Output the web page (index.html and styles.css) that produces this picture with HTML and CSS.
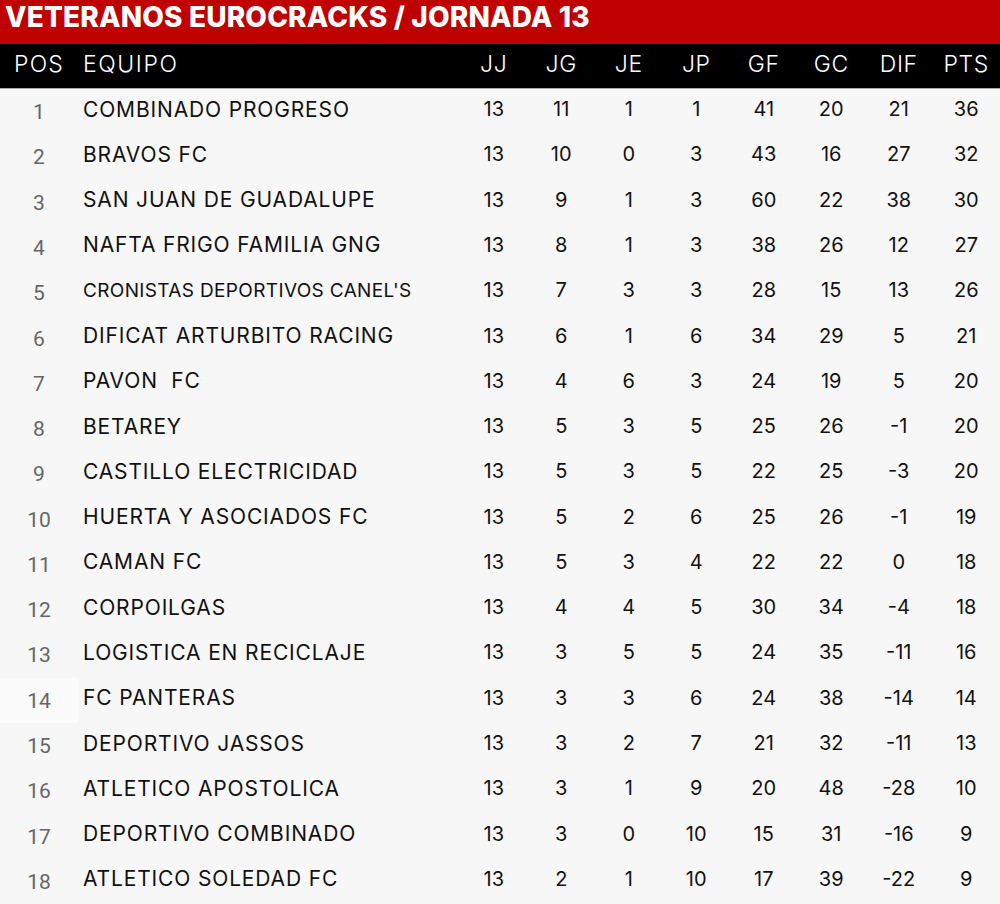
FILE: index.html
```html
<!DOCTYPE html>
<html lang="es">
<head>
<meta charset="utf-8">
<title>Veteranos Eurocracks / Jornada 13</title>
<link rel="stylesheet" href="styles.css">
</head>
<body>
<div class="board">
  <h1 class="title">VETERANOS EUROCRACKS / JORNADA 13</h1>
  <div class="row head">
    <div class="pos">POS</div><div class="team">EQUIPO</div>
    <div>JJ</div><div>JG</div><div>JE</div><div>JP</div><div>GF</div><div>GC</div><div>DIF</div><div>PTS</div>
  </div>
  <div class="rows">
    <div class="row"><div class="pos">1</div><div class="team">COMBINADO PROGRESO</div><div>13</div><div>11</div><div>1</div><div>1</div><div>41</div><div>20</div><div>21</div><div>36</div></div>
    <div class="row"><div class="pos">2</div><div class="team">BRAVOS FC</div><div>13</div><div>10</div><div>0</div><div>3</div><div>43</div><div>16</div><div>27</div><div>32</div></div>
    <div class="row"><div class="pos">3</div><div class="team">SAN JUAN DE GUADALUPE</div><div>13</div><div>9</div><div>1</div><div>3</div><div>60</div><div>22</div><div>38</div><div>30</div></div>
    <div class="row"><div class="pos">4</div><div class="team">NAFTA FRIGO FAMILIA GNG</div><div>13</div><div>8</div><div>1</div><div>3</div><div>38</div><div>26</div><div>12</div><div>27</div></div>
    <div class="row"><div class="pos">5</div><div class="team small">CRONISTAS DEPORTIVOS CANEL'S</div><div>13</div><div>7</div><div>3</div><div>3</div><div>28</div><div>15</div><div>13</div><div>26</div></div>
    <div class="row"><div class="pos">6</div><div class="team">DIFICAT ARTURBITO RACING</div><div>13</div><div>6</div><div>1</div><div>6</div><div>34</div><div>29</div><div>5</div><div>21</div></div>
    <div class="row"><div class="pos">7</div><div class="team">PAVON&nbsp; FC</div><div>13</div><div>4</div><div>6</div><div>3</div><div>24</div><div>19</div><div>5</div><div>20</div></div>
    <div class="row"><div class="pos">8</div><div class="team">BETAREY</div><div>13</div><div>5</div><div>3</div><div>5</div><div>25</div><div>26</div><div>-1</div><div>20</div></div>
    <div class="row"><div class="pos">9</div><div class="team">CASTILLO ELECTRICIDAD</div><div>13</div><div>5</div><div>3</div><div>5</div><div>22</div><div>25</div><div>-3</div><div>20</div></div>
    <div class="row"><div class="pos">10</div><div class="team">HUERTA Y ASOCIADOS FC</div><div>13</div><div>5</div><div>2</div><div>6</div><div>25</div><div>26</div><div>-1</div><div>19</div></div>
    <div class="row"><div class="pos">11</div><div class="team">CAMAN FC</div><div>13</div><div>5</div><div>3</div><div>4</div><div>22</div><div>22</div><div>0</div><div>18</div></div>
    <div class="row"><div class="pos">12</div><div class="team">CORPOILGAS</div><div>13</div><div>4</div><div>4</div><div>5</div><div>30</div><div>34</div><div>-4</div><div>18</div></div>
    <div class="row"><div class="pos">13</div><div class="team">LOGISTICA EN RECICLAJE</div><div>13</div><div>3</div><div>5</div><div>5</div><div>24</div><div>35</div><div>-11</div><div>16</div></div>
    <div class="row"><div class="pos hl">14</div><div class="team">FC PANTERAS</div><div>13</div><div>3</div><div>3</div><div>6</div><div>24</div><div>38</div><div>-14</div><div>14</div></div>
    <div class="row"><div class="pos">15</div><div class="team">DEPORTIVO JASSOS</div><div>13</div><div>3</div><div>2</div><div>7</div><div>21</div><div>32</div><div>-11</div><div>13</div></div>
    <div class="row"><div class="pos">16</div><div class="team">ATLETICO APOSTOLICA</div><div>13</div><div>3</div><div>1</div><div>9</div><div>20</div><div>48</div><div>-28</div><div>10</div></div>
    <div class="row"><div class="pos">17</div><div class="team">DEPORTIVO COMBINADO</div><div>13</div><div>3</div><div>0</div><div>10</div><div>15</div><div>31</div><div>-16</div><div>9</div></div>
    <div class="row"><div class="pos">18</div><div class="team">ATLETICO SOLEDAD FC</div><div>13</div><div>2</div><div>1</div><div>10</div><div>17</div><div>39</div><div>-22</div><div>9</div></div>
  </div>
</div>
</body>
</html>
```
FILE: styles.css
```css
* { box-sizing: border-box; }
html, body { margin: 0; padding: 0; }
body {
  width: 1000px;
  height: 904px;
  overflow: hidden;
  background: #f7f7f7;
  font-family: "Inter", "Open Sans", sans-serif;
}
.board { display: flex; flex-direction: column; height: 904px; }
.title {
  margin: 0;
  height: 44px;
  background: #c00000;
  color: #fff;
  font-family: "Inter", sans-serif;
  font-weight: 800;
  font-size: 28px;
  line-height: 34px;
  padding-left: 5px;
  letter-spacing: 0.15px;
}
.row {
  display: grid;
  grid-template-columns: 78px 382px repeat(8, 1fr);
  align-items: center;
  font-size: 20px;
  color: #111;
}
.row > div { text-align: center; }
.row > .team { text-align: left; padding-left: 5px; white-space: nowrap; font-size: 21px; letter-spacing: 0.85px; }
.head {
  height: 45px;
  background: #000;
  color: #fff;
  font-weight: 300;
  font-size: 23px;
  border-bottom: 1px solid #a8a8a8;
  padding-bottom: 4px;
}
.head > div { letter-spacing: 0.6px; }
.head .pos {
  color: #fff;
  font-family: "Inter", sans-serif;
  font-size: 23px;
  padding-top: 0;
  letter-spacing: 1.2px;
}
.head .team { font-size: 23px; letter-spacing: 1.6px; }
.rows {
  flex: 1;
  display: grid;
  grid-template-rows: repeat(18, 1fr);
}
.rows .row { height: 100%; padding-bottom: 5px; }
.pos {
  color: #666;
  font-family: "Roboto", sans-serif;
  font-size: 21px;
  align-self: stretch;
  display: flex;
  align-items: center;
  justify-content: center;
  padding-top: 1px;
}
.rows .pos { margin-bottom: -5px; }
.pos.hl { background: #fbfbfb; }
.row > .team.small { font-size: 19px; letter-spacing: 0.35px; }
```
